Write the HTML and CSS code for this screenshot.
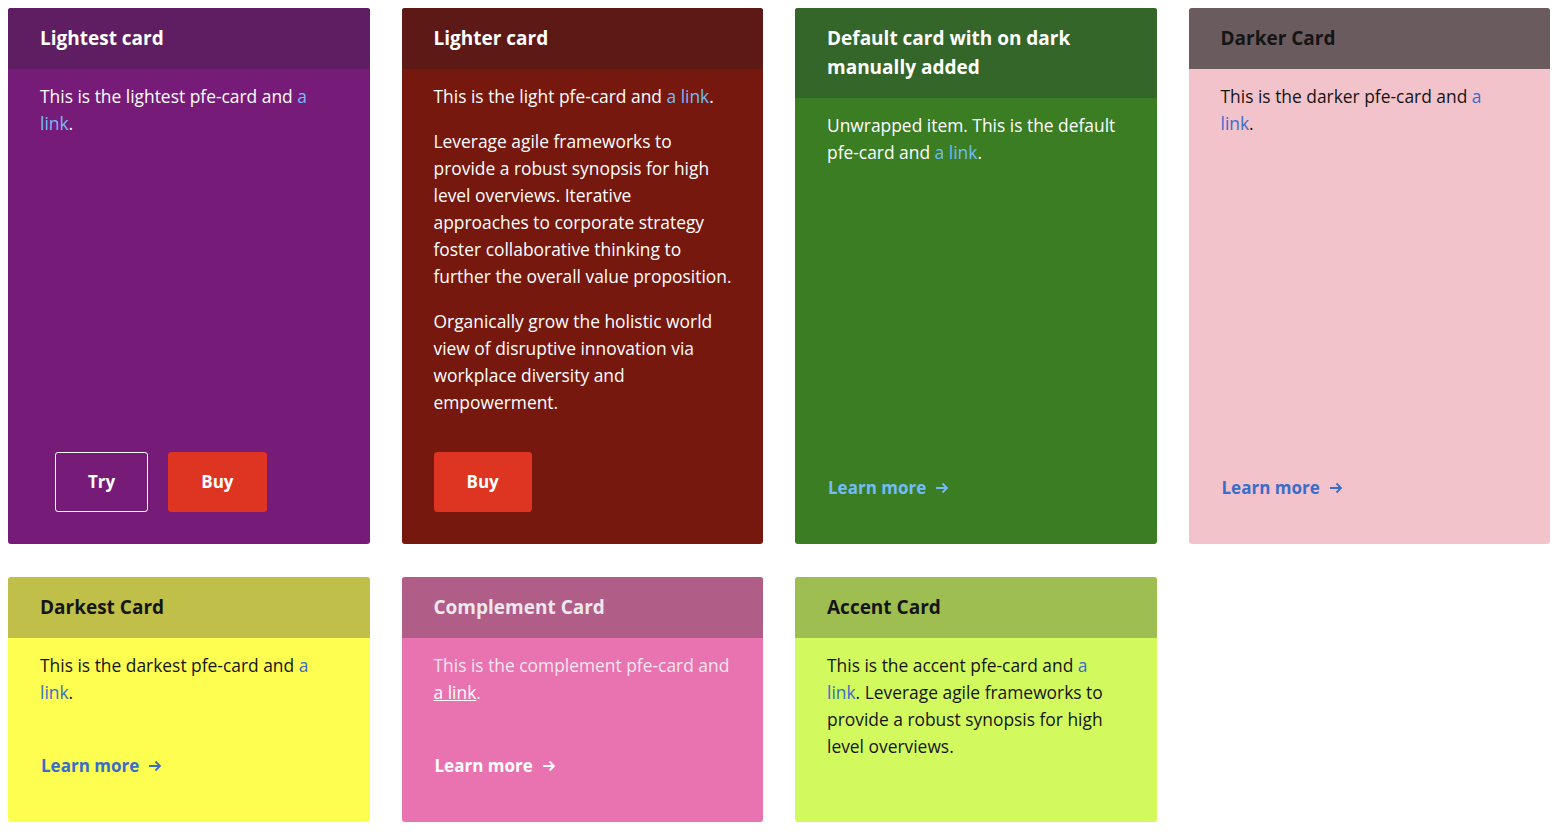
FILE: index.html
```html
<!DOCTYPE html>
<html lang="en">
<head>
<meta charset="utf-8">
<title>pfe-card colors</title>
<link rel="stylesheet" href="styles.css">
</head>
<body>
<div class="grid">
  <div class="card lightest">
    <div class="card-header"><h3>Lightest card</h3></div>
    <div class="card-body"><p>This is the lightest pfe-card and <a href="#">a link</a>.</p></div>
    <div class="card-footer buttons">
      <button class="btn btn-secondary">Try</button>
      <button class="btn btn-primary">Buy</button>
    </div>
  </div>
  <div class="card lighter">
    <div class="card-header"><h3>Lighter card</h3></div>
    <div class="card-body">
      <p>This is the light pfe-card and <a href="#">a link</a>.</p>
      <p>Leverage agile frameworks to provide a robust synopsis for high level overviews. Iterative approaches to corporate strategy foster collaborative thinking to <span class="nowrap">further the overall value proposition.</span></p>
      <p>Organically grow the holistic world view of disruptive innovation via workplace diversity and empowerment.</p>
    </div>
    <div class="card-footer">
      <button class="btn btn-primary">Buy</button>
    </div>
  </div>
  <div class="card default-dark">
    <div class="card-header"><h3>Default card with on dark manually added</h3></div>
    <div class="card-body"><p>Unwrapped item. This is the default pfe-card and <a href="#">a link</a>.</p></div>
    <div class="card-footer"><a class="learn" href="#">Learn more <svg class="arrow" viewBox="0 0 14 12" width="14" height="12"><path d="M1 6h11M7.5 1.5 12 6l-4.5 4.5" fill="none" stroke="currentColor" stroke-width="1.8"/></svg></a></div>
  </div>
  <div class="card darker">
    <div class="card-header"><h3>Darker Card</h3></div>
    <div class="card-body"><p>This is the darker pfe-card and <a href="#">a link</a>.</p></div>
    <div class="card-footer"><a class="learn" href="#">Learn more <svg class="arrow" viewBox="0 0 14 12" width="14" height="12"><path d="M1 6h11M7.5 1.5 12 6l-4.5 4.5" fill="none" stroke="currentColor" stroke-width="1.8"/></svg></a></div>
  </div>
  <div class="card darkest">
    <div class="card-header"><h3>Darkest Card</h3></div>
    <div class="card-body"><p>This is the darkest pfe-card and <a href="#">a link</a>.</p></div>
    <div class="card-footer"><a class="learn" href="#">Learn more <svg class="arrow" viewBox="0 0 14 12" width="14" height="12"><path d="M1 6h11M7.5 1.5 12 6l-4.5 4.5" fill="none" stroke="currentColor" stroke-width="1.8"/></svg></a></div>
  </div>
  <div class="card complement">
    <div class="card-header"><h3>Complement Card</h3></div>
    <div class="card-body"><p>This is the complement pfe-card and <a href="#">a link</a>.</p></div>
    <div class="card-footer"><a class="learn" href="#">Learn more <svg class="arrow" viewBox="0 0 14 12" width="14" height="12"><path d="M1 6h11M7.5 1.5 12 6l-4.5 4.5" fill="none" stroke="currentColor" stroke-width="1.8"/></svg></a></div>
  </div>
  <div class="card accent">
    <div class="card-header"><h3>Accent Card</h3></div>
    <div class="card-body"><p>This is the accent pfe-card and <a href="#">a link</a>. Leverage agile frameworks to provide a robust synopsis for high level overviews.</p></div>
  </div>
</div>
</body>
</html>
```

FILE: styles.css
```css
* { box-sizing: border-box; }
body {
  margin: 8px;
  background: #fff;
  font-family: "Open Sans", "Noto Sans", sans-serif;
  color: #151515;
}
.grid {
  width: 1542px;
  display: grid;
  grid-template-columns: repeat(4, 1fr);
  column-gap: 32px;
  row-gap: 33px;
}
.card {
  display: flex;
  flex-direction: column;
  border-radius: 3px;
  overflow: hidden;
  padding-bottom: 32px;
}
.card-header {
  padding: 16px 32px;
}
.card-header h3 {
  margin: 0;
  font-size: 19px;
  line-height: 29px;
  font-weight: 700;
}
.card-body {
  flex: 1;
  padding: 14px 32px 0;
  font-size: 17.4px;
  font-weight: 500;
  line-height: 27px;
}
.nowrap { white-space: nowrap; }
.card-body p { margin: 0 0 18px; }
.card-body p:last-child { margin-bottom: 0; }
.card-body a { text-decoration: none; }
.card-footer {
  margin-top: 36px;
  padding: 0 32px;
  display: flex;
  align-items: center;
}
.buttons { padding-left: 47px; gap: 20px; }
.btn {
  font-family: inherit;
  font-size: 17px;
  font-weight: 700;
  line-height: 26px;
  padding: 16px 32px;
  border-radius: 3px;
  border: 1px solid transparent;
  color: #fff;
  cursor: pointer;
}
.btn-primary { background: #dd3521; border-color: #dd3521; }
.btn-secondary { background: transparent; border-color: #fff; }
.learn {
  display: inline-flex;
  align-items: center;
  gap: 9px;
  font-size: 17px;
  font-weight: 700;
  line-height: 26px;
  padding: 11px 1px;
  text-decoration: none;
}
.arrow { display: block; }

/* colour themes */
.lightest .card-header { background: #5e1e61; color: #fff; }
.lightest { background: #761c78; color: #fff; }
.lighter .card-header { background: #5c1916; color: #fff; }
.lighter { background: #77180e; color: #fff; }
.default-dark .card-header { background: #336628; color: #fff; }
.default-dark { background: #3a7d23; color: #fff; }
.darker .card-header { background: #6a5b5e; color: #151515; }
.darker { background: #f3c3cb; color: #151515; }
.darkest .card-header { background: #bfbf49; color: #151515; }
.darkest { background: #fefe50; color: #151515; }
.complement .card-header { background: #b05e87; color: #efe8ee; }
.complement { background: #e973b0; color: #f3e6ee; }
.accent .card-header { background: #9fbe51; color: #151515; }
.accent { background: #d2fa5e; color: #151515; }

.lightest a, .lighter a, .default-dark a { color: #73bcf7; }
.darker a, .darkest a, .accent a { color: #3a6cc9; }
.complement .card-body a { color: #fff; text-decoration: underline; }
.complement .learn { color: #fff; }
```
